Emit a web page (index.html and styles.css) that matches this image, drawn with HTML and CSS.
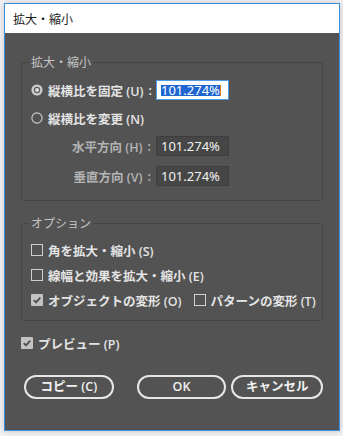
FILE: index.html
```html
<!DOCTYPE html>
<html lang="ja">
<head>
<meta charset="utf-8">
<title>拡大・縮小</title>
<link rel="stylesheet" href="styles.css">
</head>
<body>
<div class="win">
  <div class="titlebar">拡大・縮小</div>
  <div class="content">
    <fieldset class="group g1">
      <legend>拡大・縮小</legend>
      <div class="grid">
        <div class="lbl left">
          <svg class="radio" width="12" height="12" viewBox="0 0 12 12"><circle cx="6" cy="6" r="5.6" fill="#cdcdcd"/><circle cx="6" cy="6" r="3.2" fill="#5c5c5c"/><circle cx="6" cy="6" r="2" fill="#dcdcdc"/></svg>
          <span>縦横比を固定 (U)</span><span class="colon">:</span>
        </div>
        <div class="input sel"><span class="hl">101.274%</span><span class="caret"></span></div>

        <div class="lbl left span2">
          <svg class="radio" width="12" height="12" viewBox="0 0 12 12"><circle cx="6" cy="6" r="5.1" fill="none" stroke="#cdcdcd" stroke-width="1.1"/></svg>
          <span>縦横比を変更 (N)</span>
        </div>

        <div class="lbl right dim"><span>水平方向 (H)</span><span class="colon">:</span></div>
        <div class="input">101.274%</div>

        <div class="lbl right dim last"><span>垂直方向 (V)</span><span class="colon">:</span></div>
        <div class="input last">101.274%</div>
      </div>
    </fieldset>

    <fieldset class="group g2">
      <legend>オプション</legend>
      <div class="checks">
        <div class="chk">
          <svg class="box" width="12" height="12" viewBox="0 0 12 12"><rect x="0.5" y="0.5" width="11" height="11" fill="none" stroke="#cfcfcf"/></svg>
          <span>角を拡大・縮小 (S)</span>
        </div>
        <div class="chk">
          <svg class="box" width="12" height="12" viewBox="0 0 12 12"><rect x="0.5" y="0.5" width="11" height="11" fill="none" stroke="#cfcfcf"/></svg>
          <span>線幅と効果を拡大・縮小 (E)</span>
        </div>
        <div class="chk-row">
          <div class="chk">
            <svg class="box" width="12" height="12" viewBox="0 0 12 12"><rect x="0" y="0" width="12" height="12" rx="1" fill="#c4c4c4"/><path d="M2.8 6.2 L5 8.4 L9.3 3.6" fill="none" stroke="#505050" stroke-width="1.9"/></svg>
            <span>オブジェクトの変形 (O)</span>
          </div>
          <div class="chk">
            <svg class="box" width="12" height="12" viewBox="0 0 12 12"><rect x="0.5" y="0.5" width="11" height="11" fill="none" stroke="#cfcfcf"/></svg>
            <span>パターンの変形 (T)</span>
          </div>
        </div>
      </div>
    </fieldset>

    <div class="chk preview">
      <svg class="box" width="12" height="12" viewBox="0 0 12 12"><rect x="0" y="0" width="12" height="12" rx="1" fill="#c4c4c4"/><path d="M2.8 6.2 L5 8.4 L9.3 3.6" fill="none" stroke="#505050" stroke-width="1.9"/></svg>
      <span>プレビュー (P)</span>
    </div>

    <div class="buttons">
      <button class="btn b1">コピー (C)</button>
      <button class="btn b2">OK</button>
      <button class="btn b3">キャンセル</button>
    </div>
  </div>
</div>
</body>
</html>
```

FILE: styles.css
```css
html, body {
  margin: 0;
  padding: 0;
}
body {
  width: 343px;
  height: 436px;
  background: #f1f1f1;
  font-family: "Open Sans", "Noto Sans CJK JP", sans-serif;
  overflow: hidden;
}
.win {
  box-sizing: border-box;
  margin: 3px 0 0 4px;
  width: 336px;
  height: 428px;
  border: 1px solid #3a8ede;
  background: #535353;
  display: flex;
  flex-direction: column;
  box-shadow: 0 0 6px rgba(0,0,0,0.18);
}
.titlebar {
  height: 29px;
  background: #ffffff;
  color: #1a1a1a;
  font-family: "Noto Sans CJK JP", sans-serif;
  font-size: 12px;
  line-height: 29px;
  padding-left: 8px;
  flex: none;
}
.content {
  flex: 1;
  padding: 21px 16px 0 16px;
  display: flex;
  flex-direction: column;
}
.group {
  margin: 0;
  border: 1px solid #444444;
  border-radius: 3px;
  padding: 0 9px;
  min-width: 0;
}
.group legend {
  padding: 0 2px;
  margin-left: -2px;
  color: #c4c4c4;
  font-family: "Noto Sans CJK JP", sans-serif;
  font-size: 12px;
  line-height: 16px;
}
.g1 {
  padding-top: 10px;
  padding-bottom: 14px;
}
.grid {
  display: grid;
  grid-template-columns: 125px 73px;
  row-gap: 8px;
  align-items: center;
}
.lbl {
  display: flex;
  align-items: center;
  height: 20px;
  color: #e4e4e4;
  font-weight: 600;
  font-size: 12.5px;
  white-space: nowrap;
}
.lbl.left { justify-content: flex-start; }
.lbl.right { justify-content: flex-end; }
.lbl.dim { color: #b4b4b4; }
.span2 { grid-column: 1 / span 2; }
.last { margin-top: 2px; }
.radio {
  flex: none;
  margin-right: 5px;
}
.colon {
  margin: 0 5px 0 5px;
}
.input {
  box-sizing: border-box;
  height: 20px;
  width: 73px;
  background: #464646;
  border: 1px solid #3e3e3e;
  color: #f2f2f2;
  font-family: "Noto Sans", sans-serif;
  font-size: 13px;
  line-height: 18px;
  padding-left: 4px;
  display: flex;
  align-items: center;
}
.input.sel {
  background: #ffffff;
  border: 1px solid #4f9be6;
}
.hl {
  background: #1f66d1;
  color: #ffffff;
  line-height: 11px;
  padding: 0;
}
.caret {
  width: 1px;
  height: 11px;
  background: #e07a2a;
}
.g2 {
  margin-top: 14px;
  padding-top: 10px;
  padding-bottom: 11px;
}
.checks {
  display: flex;
  flex-direction: column;
  gap: 7px;
}
.chk {
  display: flex;
  align-items: center;
  height: 18px;
  color: #e4e4e4;
  font-weight: 600;
  font-size: 12.5px;
  white-space: nowrap;
}
.box {
  flex: none;
  margin-right: 5px;
}
.chk-row {
  display: flex;
  gap: 12px;
}
.preview {
  margin-top: 13px;
}
.buttons {
  display: flex;
  margin-top: 23px;
  padding-left: 3px;
}
.btn {
  box-sizing: border-box;
  height: 24px;
  border: 2px solid #e6e6e6;
  border-radius: 12px;
  background: transparent;
  color: #f2f2f2;
  font-family: "Open Sans", "Noto Sans CJK JP", sans-serif;
  font-weight: 600;
  font-size: 12.5px;
  padding: 0;
  line-height: 20px;
}
.b1 { width: 91px; }
.b2 { width: 91px; margin-left: 23px; }
.b3 { width: 93px; margin-left: 5px; }
```
